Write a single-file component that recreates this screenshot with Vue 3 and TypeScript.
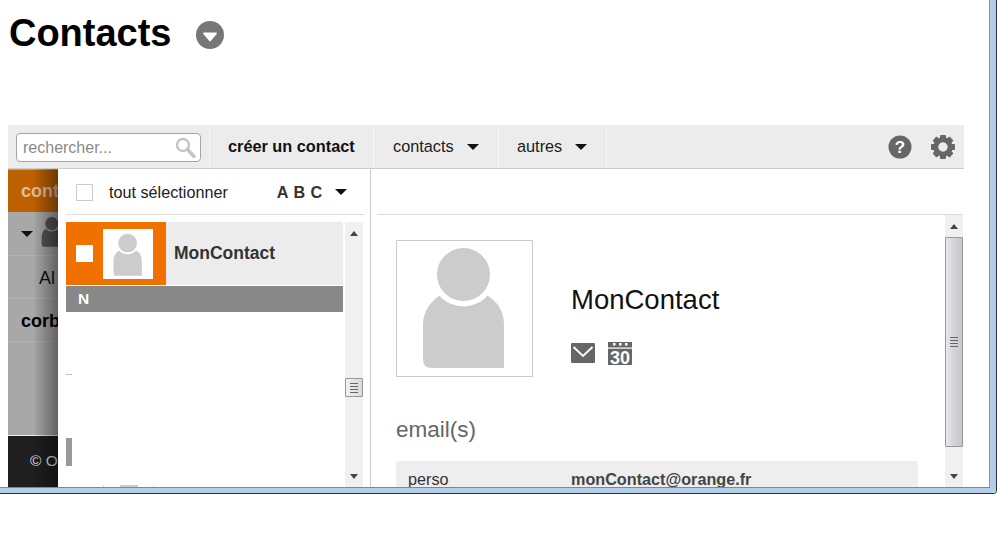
<script setup lang="ts">
const teeth: number[] = [0, 45, 90, 135, 180, 225, 270, 315];
</script>

<template>
  <div class="outer">
    <div class="frame">
      <div class="page">
        <header class="title">
          <h1>Contacts</h1>
          <svg class="title-btn" width="28" height="28" viewBox="0 0 28 28">
            <circle cx="14" cy="14" r="14" fill="#777" />
            <path d="M8 12.5 H20 L14 19.5 Z" fill="#fff" stroke="#fff" stroke-width="1.8" stroke-linejoin="round" />
          </svg>
        </header>

        <nav class="toolbar">
          <div class="search">
            <div class="search-box">
              <span>rechercher...</span>
              <svg width="21" height="21" viewBox="0 0 21 21">
                <circle cx="8" cy="8" r="6" fill="none" stroke="#c4c4c4" stroke-width="2.4" />
                <path d="M12.5 12.5 L19 19.5" stroke="#c4c4c4" stroke-width="3.4" stroke-linecap="round" />
              </svg>
            </div>
          </div>
          <div class="tool tool-create">créer un contact</div>
          <div class="tool tool-contacts">contacts<i class="caret"></i></div>
          <div class="tool tool-others">autres<i class="caret"></i></div>
          <div class="tool-icons">
            <svg width="24" height="24" viewBox="0 0 24 24">
              <circle cx="12" cy="12" r="11.5" fill="#666" />
              <text x="12" y="18" text-anchor="middle" class="help-mark">?</text>
            </svg>
            <svg width="26" height="26" viewBox="0 0 26 26">
              <circle cx="13" cy="13" r="7.2" fill="none" stroke="#666" stroke-width="5" />
              <rect
                v-for="a in teeth"
                :key="a"
                x="10"
                y="1"
                width="6"
                height="5"
                rx="1"
                fill="#666"
                :transform="`rotate(${a} 13 13)`"
              />
            </svg>
          </div>
        </nav>

        <main class="body">
          <aside class="side">
            <div class="side-head">cont</div>
            <div class="side-row side-tree">
              <i class="caret caret-side"></i>
              <svg class="side-person" width="34" height="34" viewBox="0 0 137 137">
                <path d="M27 85 C27 70 36 60 45 55 H90 C100 60 108 70 108 85 V128 H36 Q27 128 27 119 Z" fill="#555" />
                <circle cx="67.5" cy="34.5" r="32" fill="#a6a6a6" />
                <circle cx="67.5" cy="34.5" r="26.5" fill="#555" />
              </svg>
            </div>
            <div class="side-row side-all">Al</div>
            <div class="side-row side-bin">corb</div>
            <div class="side-fill"></div>
            <div class="side-foot">© O</div>
            <div class="side-shade"></div>
          </aside>

          <section class="list">
            <div class="list-head">
              <span class="check"></span>
              <span class="select-all">tout sélectionner</span>
              <span class="alpha">A B C</span>
              <i class="caret"></i>
            </div>
            <div class="list-main">
              <div class="list-col">
                <div class="item">
                  <div class="item-mark">
                    <span class="check check-item"></span>
                    <div class="item-photo">
                      <svg width="48" height="48" viewBox="0 0 137 137">
                        <path d="M27 85 C27 70 36 60 45 55 H90 C100 60 108 70 108 85 V128 H36 Q27 128 27 119 Z" fill="#ccc" />
                        <circle cx="67.5" cy="34.5" r="32" fill="#fff" />
                        <circle cx="67.5" cy="34.5" r="26.5" fill="#ccc" />
                      </svg>
                    </div>
                  </div>
                  <div class="item-name">MonContact</div>
                </div>
                <div class="letter">N</div>
                <div class="ghost-dash"></div>
                <div class="ghost-block"></div>
                <div class="ghost-photo"><span></span></div>
              </div>
              <div class="scroll">
                <div class="scroll-btn"><i class="tri tri-up"></i></div>
                <div class="thumb-small"><b></b><b></b><b></b><b></b></div>
                <div class="scroll-btn scroll-btn-end"><i class="tri tri-down"></i></div>
              </div>
            </div>
          </section>

          <section class="detail">
            <div class="detail-head"></div>
            <div class="detail-main">
              <div class="detail-content">
                <div class="person">
                  <div class="photo">
                    <svg width="135" height="135" viewBox="1 1 135 135">
                      <path d="M27 85 C27 70 36 60 45 55 H90 C100 60 108 70 108 85 V128 H36 Q27 128 27 119 Z" fill="#ccc" />
                      <circle cx="67.5" cy="34.5" r="32" fill="#fff" />
                      <circle cx="67.5" cy="34.5" r="26.5" fill="#ccc" />
                    </svg>
                  </div>
                  <div class="person-info">
                    <div class="person-name">MonContact</div>
                    <div class="person-actions">
                      <svg width="24" height="20" viewBox="0 0 24 20">
                        <rect width="24" height="20" rx="1" fill="#666" />
                        <path d="M2.5 4 L12 13 L21.5 4" fill="none" stroke="#fff" stroke-width="1.8" />
                      </svg>
                      <svg width="24" height="24" viewBox="0 0 24 24">
                        <path d="M0 1 H24 V24 H0 Z" fill="#666" />
                        <rect x="5" y="2" width="2.5" height="2.5" fill="#fff" />
                        <rect x="11" y="2" width="2.5" height="2.5" fill="#fff" />
                        <rect x="17" y="2" width="2.5" height="2.5" fill="#fff" />
                        <rect x="0" y="6.5" width="24" height="1.2" fill="#fff" />
                        <text x="12" y="22.5" text-anchor="middle" class="cal-num">30</text>
                      </svg>
                    </div>
                  </div>
                </div>
                <h2 class="section-title">email(s)</h2>
                <div class="mail-row">
                  <span class="mail-label">perso</span>
                  <span class="mail-value">monContact@orange.fr</span>
                </div>
              </div>
              <div class="scroll">
                <div class="scroll-btn"><i class="tri tri-up"></i></div>
                <div class="thumb-big"><b></b><b></b><b></b><b></b></div>
                <div class="scroll-btn scroll-btn-end"><i class="tri tri-down"></i></div>
              </div>
            </div>
          </section>
        </main>
      </div>
    </div>
  </div>
</template>

<style>
html,
body {
  margin: 0;
  background: #fff;
}
</style>

<style scoped>
.outer {
  width: 997px;
  height: 494px;
  box-sizing: border-box;
  border-right: 1px solid #22323f;
  border-bottom: 1px solid #22323f;
  border-bottom-right-radius: 4px;
  overflow: hidden;
  font-family: "Liberation Sans", Arial, sans-serif;
  color: #222;
}
.frame {
  height: 493px;
  box-sizing: border-box;
  border-right: 6px solid #b3cde8;
  border-bottom: 5px solid #b6cfe9;
  background: #fff;
}
.page {
  height: 488px;
  box-sizing: border-box;
  padding-left: 8px;
  border-bottom: 1px solid #6f8ca5;
  border-right: 1px solid #7f9ab3;
  overflow: hidden;
}
.title {
  height: 125px;
  box-sizing: border-box;
  display: flex;
  align-items: flex-start;
  padding: 11px 0 0 1px;
}
h1 {
  margin: 0;
  font-size: 38px;
  line-height: 44px;
  font-weight: 700;
  color: #000;
  letter-spacing: -0.02px;
}
.title-btn {
  margin: 10px 0 0 25px;
}
.toolbar {
  width: 956px;
  height: 44px;
  box-sizing: border-box;
  display: flex;
  background: #ececec;
  border-bottom: 1px solid #ccc;
}
.search {
  width: 202px;
  box-sizing: border-box;
  padding: 8px 0 0 8px;
  border-right: 1px solid #f8f8f8;
  flex: none;
}
.search-box {
  width: 185px;
  height: 29px;
  box-sizing: border-box;
  background: #fff;
  border: 1px solid #a5a5a5;
  border-radius: 4px;
  display: flex;
  align-items: center;
  justify-content: space-between;
  padding: 0 4px 0 6px;
  font-size: 16px;
  color: #8a8a8a;
}
.tool {
  display: flex;
  align-items: center;
  font-size: 16.3px;
  box-sizing: border-box;
  padding-left: 19px;
  border-right: 1px solid #f8f8f8;
  flex: none;
  color: #1c1c1c;
}
.tool-create {
  width: 164px;
  padding-left: 18px;
  font-weight: 700;
  color: #111;
}
.tool-contacts {
  width: 125px;
}
.tool-others {
  width: 108px;
  padding-left: 18px;
}
.caret {
  display: inline-block;
  width: 0;
  height: 0;
  border-left: 6px solid transparent;
  border-right: 6px solid transparent;
  border-top: 6px solid #111;
  margin-left: 13px;
}
.tool-icons {
  margin-left: auto;
  display: flex;
  align-items: center;
  gap: 18px;
  padding-right: 8px;
}
.help-mark {
  font-family: "Liberation Sans", Arial, sans-serif;
  font-size: 17px;
  font-weight: 700;
  fill: #fff;
}
.body {
  width: 956px;
  height: 318px;
  display: flex;
  overflow: hidden;
}
.side {
  position: relative;
  width: 50px;
  flex: none;
  overflow: hidden;
  display: flex;
  flex-direction: column;
  background: #a8a8a8;
  white-space: nowrap;
  font-size: 18px;
}
.side-head {
  height: 42px;
  flex: none;
  box-sizing: border-box;
  margin-top: 1px;
  background: #bd6000;
  color: #e4bd9a;
  font-weight: 700;
  padding-left: 13px;
  line-height: 43px;
}
.side-row {
  height: 43px;
  flex: none;
  box-sizing: border-box;
  border-bottom: 1px solid #b2b2b2;
  display: flex;
  align-items: center;
  color: #111;
}
.side-tree {
  height: 44px;
}
.caret-side {
  margin-left: 13px;
  flex: none;
}
.side-person {
  flex: none;
  margin: -3px 0 0 2px;
}
.side-all {
  padding: 3px 0 0 31px;
}
.side-bin {
  padding: 3px 0 0 13px;
  font-weight: 700;
  color: #000;
}
.side-fill {
  flex: 1;
}
.side-foot {
  height: 52px;
  flex: none;
  box-sizing: border-box;
  border-top: 1px solid #eee;
  background: #1f1f1f;
  color: #ddd;
  font-size: 15.5px;
  line-height: 50px;
  padding-left: 22px;
}
.side-shade {
  position: absolute;
  left: 0;
  top: 0;
  width: 100%;
  height: 100%;
  background: linear-gradient(to right, transparent 50%, rgba(0, 0, 0, 0.42));
  pointer-events: none;
}
.list {
  width: 313px;
  flex: none;
  box-sizing: border-box;
  padding-left: 8px;
  border-right: 1px solid #ccc;
  background: #fff;
}
.list-head {
  width: 298px;
  height: 46px;
  box-sizing: border-box;
  border-bottom: 1px solid #ddd;
  display: flex;
  align-items: center;
  padding: 1px 0 0 10px;
  font-size: 16.2px;
}
.check {
  width: 17px;
  height: 17px;
  box-sizing: border-box;
  border: 1px solid #ccc;
  background: #fff;
  flex: none;
}
.select-all {
  margin-left: 16px;
  color: #222;
}
.alpha {
  margin-left: 49px;
  font-weight: 700;
  color: #333;
  word-spacing: 1px;
}
.list-head .caret {
  margin-left: 13px;
}
.list-main {
  display: flex;
  gap: 2px;
  margin-top: 7px;
  height: 265px;
}
.list-col {
  width: 277px;
  flex: none;
}
.item {
  height: 63px;
  display: flex;
  background: #ececec;
}
.item-mark {
  width: 100px;
  flex: none;
  background: #f07000;
  display: flex;
  align-items: center;
  box-sizing: border-box;
  padding-left: 10px;
}
.check-item {
  border: none;
}
.item-photo {
  width: 50px;
  height: 50px;
  margin-left: 10px;
  background: #fff;
  display: flex;
  align-items: flex-end;
  justify-content: center;
}
.item-name {
  margin-left: 8px;
  font-size: 17.5px;
  font-weight: 700;
  color: #333;
  line-height: 62px;
}
.letter {
  height: 26px;
  margin-top: 1px;
  background: #888;
  color: #fff;
  font-size: 15.5px;
  font-weight: 700;
  line-height: 26px;
  padding-left: 12px;
}
.ghost-dash {
  width: 6px;
  height: 1px;
  background: #bbb;
  margin-top: 62px;
}
.ghost-block {
  width: 6px;
  height: 28px;
  background: #999;
  margin-top: 63px;
}
.ghost-photo {
  width: 51px;
  height: 2px;
  margin: 19px 0 0 37px;
  box-sizing: border-box;
  border-left: 1px solid #ddd;
  border-right: 1px solid #ddd;
  display: flex;
  justify-content: center;
}
.ghost-photo span {
  width: 18px;
  background: #ccc;
}
.scroll {
  width: 18px;
  flex: none;
  background: #f0f0f0;
  display: flex;
  flex-direction: column;
}
.scroll-btn {
  height: 22px;
  flex: none;
  display: flex;
  align-items: center;
  justify-content: center;
}
.scroll-btn-end {
  margin-top: auto;
}
.tri {
  width: 0;
  height: 0;
  border-left: 4px solid transparent;
  border-right: 4px solid transparent;
}
.tri-up {
  border-bottom: 5px solid #444;
}
.tri-down {
  border-top: 5px solid #444;
}
.thumb-small,
.thumb-big {
  box-sizing: border-box;
  flex: none;
  display: flex;
  flex-direction: column;
  align-items: center;
  justify-content: center;
  gap: 2px;
  border: 1px solid #979797;
  border-radius: 1px;
}
.thumb-small {
  height: 19px;
  margin-top: 134px;
  background: linear-gradient(to right, #f2f2f2, #d8d8d8);
}
.thumb-big {
  height: 210px;
  background: linear-gradient(to right, #e8e8ea, #d6d6da 45%, #c6c6cb);
}
.thumb-small b,
.thumb-big b {
  display: block;
  width: 8px;
  height: 1px;
  background: #666;
}
.detail {
  margin-left: 6px;
  width: 587px;
  flex: none;
  background: #fff;
}
.detail-head {
  height: 46px;
  box-sizing: border-box;
  border-bottom: 1px solid #ddd;
  width: 586px;
}
.detail-main {
  display: flex;
  height: 272px;
}
.detail-content {
  width: 568px;
  flex: none;
  box-sizing: border-box;
  padding: 25px 0 0 19px;
  overflow: hidden;
}
.person {
  display: flex;
}
.photo {
  width: 137px;
  height: 137px;
  box-sizing: border-box;
  border: 1px solid #ccc;
  flex: none;
}
.photo svg {
  display: block;
}
.person-info {
  margin-left: 38px;
  padding-top: 44px;
}
.person-name {
  font-size: 27.5px;
  line-height: 32px;
  color: #111;
}
.person-actions {
  display: flex;
  align-items: center;
  gap: 13px;
  margin-top: 25px;
}
.cal-num {
  font-family: "Liberation Sans", Arial, sans-serif;
  font-size: 18px;
  font-weight: 700;
  fill: #fff;
}
.section-title {
  margin: 39px 0 17px;
  font-size: 22.5px;
  line-height: 28px;
  font-weight: 400;
  color: #666;
}
.mail-row {
  width: 522px;
  height: 37px;
  box-sizing: border-box;
  background: #eee;
  border-radius: 3px;
  padding-left: 12px;
  display: flex;
  align-items: center;
  font-size: 16.2px;
}
.mail-label {
  width: 163px;
  flex: none;
  color: #333;
}
.mail-value {
  font-weight: 700;
  color: #444;
}
</style>
